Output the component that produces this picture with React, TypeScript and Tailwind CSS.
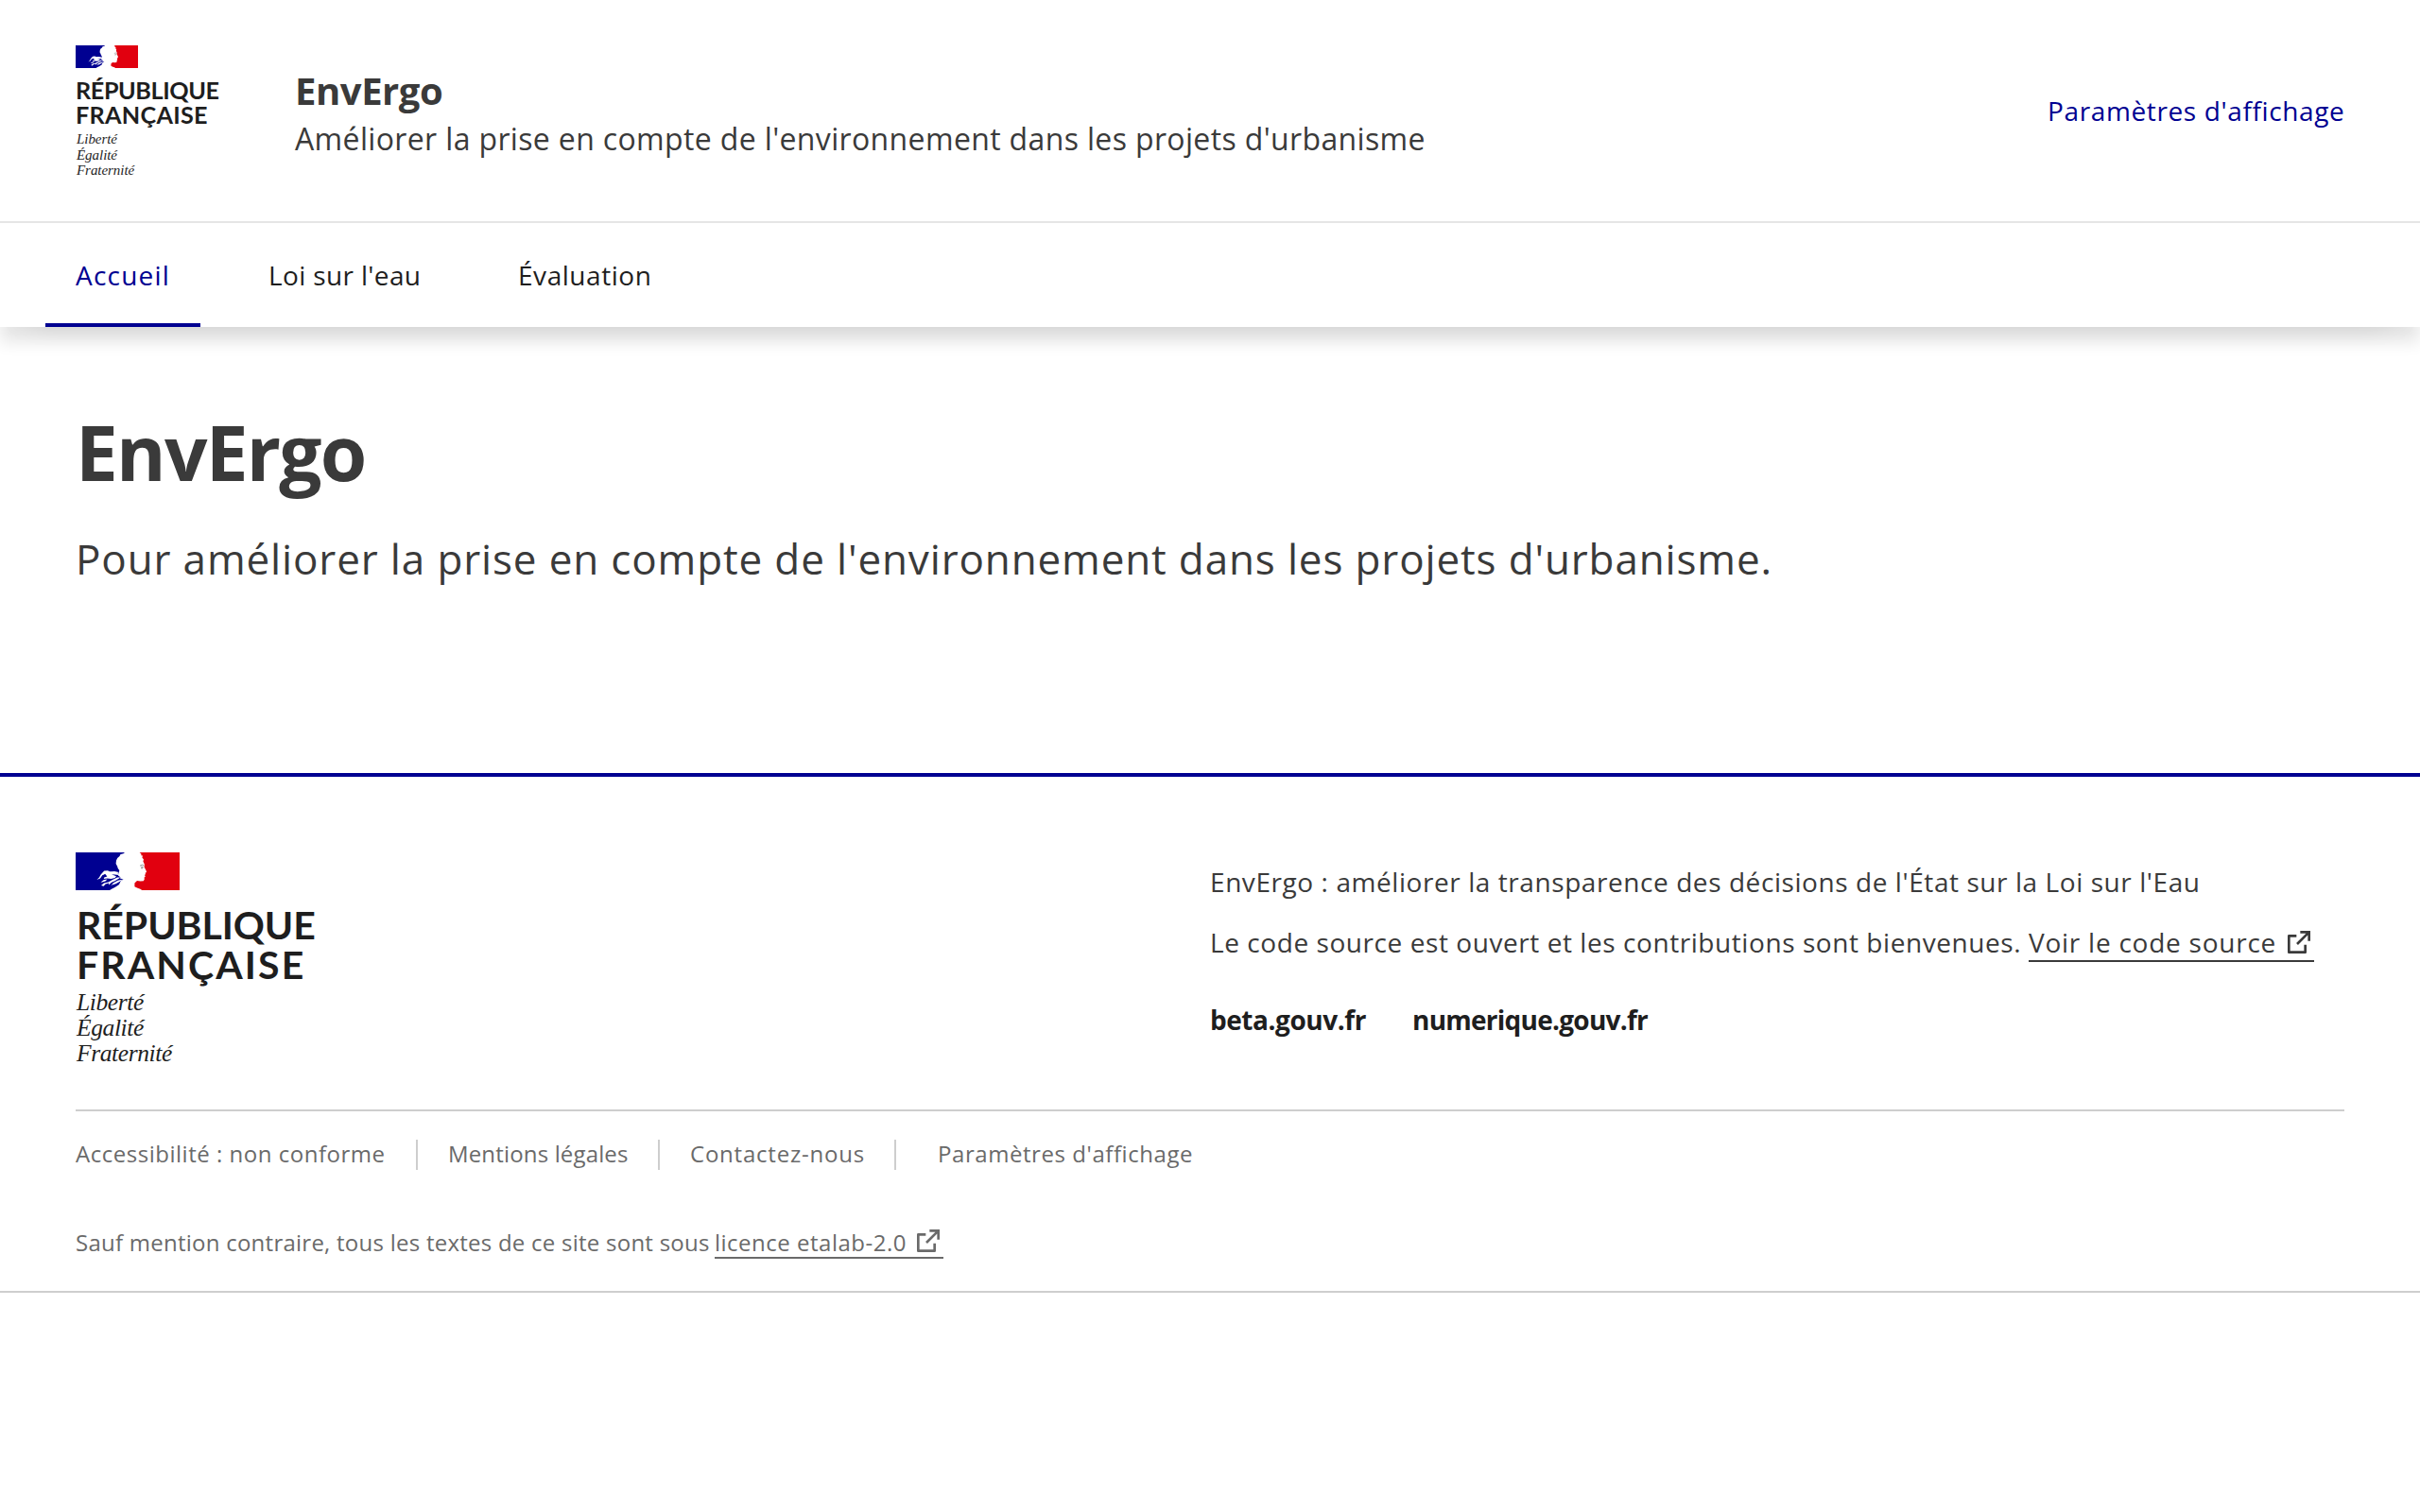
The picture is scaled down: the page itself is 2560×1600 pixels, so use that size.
import React from "react";

function Marianne({ className }: { className: string }) {
  return (
    <svg viewBox="0 0 110 40" className={className} aria-hidden="true">
      <path d="M0 0h110v40H0z" fill="#fff" />
      <path
        fill="#000091"
        d="M0 0H52L50.5 1.2 47.5 2 46.5 4 44.2 6 43 8.5 42.6 12 44 14.5 44.8 17 46.3 19 45.6 21.4 45 24.5 47.4 26.2 47 27.6 50.5 28.6 47.6 30.6 46 34 41.5 37 38.5 38.4 36 40H0z"
      />
      <path
        fill="#fff"
        d="M22.4 29 25 26.6 26.6 23.4 30.2 19.4 34 19.2 36.5 20.6 40.5 21.2 45.8 22.4 45.6 24 41.5 23.6 38 23.2 43 25.2 41.5 27 37.5 28 33.5 27.4 29.8 28 30.2 26.6 33.4 25.6 31 22.6 28.2 24.2 26 27.4z"
      />
      <path
        fill="#fff"
        d="M35.5 20.4 41 20 45.6 21 44 22.4 39 22zM26.5 31.4 30 29 33.5 28.6 31.5 30.6 28 31.6zM27 35 30 32.4 34.6 31.4 39 29 44 26.6 47.4 26.4 46 27.6 41.5 30.2 38 31.8 35 34.6 35.2 32.4 31.6 33.6 29.6 35.8zM37 35.4 40 32.2 44.5 29.8 50.4 28.6 46 31.2 42.5 33.2 38.4 34.4zM28 24 30.6 21.4 33.4 20.8 31 23z"
      />
      <path
        fill="#e1000f"
        d="M67.6 0H110V40H70.2L68.4 38.8 65.6 37.8 62.4 36.2 62.4 32.4 65 30 68.6 30.4 71.8 30.2 72.8 28.6 72.6 26.6 73.8 25.4 73 24 74 23 73.6 21.8 75 21 74.6 19.2 72.6 15.6 72.8 12.4 71.4 9.4 72 7.4 70.4 5.6 71 3.4 69.4 3.2 69.4 1.4z"
      />
      <path d="M68 14.2 70.4 13.2 72 13.8M69.2 15.2 71.2 15.4 70.6 17 69 16.6" fill="none" stroke="#8a8a8a" strokeWidth=".9" />
    </svg>
  );
}

function ExternalIcon({ className }: { className: string }) {
  return (
    <svg viewBox="0 0 24 24" fill="currentColor" className={className} aria-hidden="true">
      <path d="M10 6v2H5v11h11v-5h2v6a1 1 0 0 1-1 1H4a1 1 0 0 1-1-1V7a1 1 0 0 1 1-1h6zm11-3v8h-2V6.413l-7.793 7.794-1.414-1.414L17.585 5H13V3h8z" />
    </svg>
  );
}

function Header() {
  return (
    <header className="bg-white shadow-[0_16px_16px_0_rgba(0,0,0,0.1),0_16px_32px_-32px_rgba(0,0,0,0.32)]">
      <div className="flex h-[236px] items-start border-b-2 border-[#e5e5e5] px-20">
        <div className="w-[233px] pt-12 text-[#1e1e1e]">
          <Marianne className="block h-6 w-[66px]" />
          <div className="mt-[10px] font-['Lato',sans-serif] text-[25.2px] leading-[26px] font-bold">
            <p className="tracking-[-0.4px]">RÉPUBLIQUE</p>
            <p className="tracking-[0.28px]">FRANÇAISE</p>
          </div>
          <div className="mt-[5px] pl-px font-['Liberation_Serif',serif] text-[15px] leading-[16.5px] tracking-[-0.05px] italic">
            <p>Liberté</p>
            <p>Égalité</p>
            <p>Fraternité</p>
          </div>
        </div>
        <div className="grow pt-[71.5px]">
          <p className="-ml-px text-[40px] leading-[48px] font-bold tracking-[-0.435px]">EnvErgo</p>
          <p className="-ml-px mt-[3px] text-[32px] leading-[48px] tracking-[0.355px]">
            Améliorer la prise en compte de l'environnement dans les projets d'urbanisme
          </p>
        </div>
        <a className="mt-[93px] w-[314px] text-[28px] leading-[48px] tracking-[0.625px] whitespace-nowrap text-[#000091]">
          Paramètres d'affichage
        </a>
      </div>
      <nav className="flex h-[110px] pl-12 text-[28px] leading-[48px] whitespace-nowrap text-[#1e1e1e]">
        <a className="w-[164px] border-b-4 border-[#000091] pt-[31px] pl-[32px] tracking-[1.2px] text-[#000091]">Accueil</a>
        <a className="ml-[72px] w-[160px] pt-[31px] tracking-[0.36px]">Loi sur l'eau</a>
        <a className="ml-[104px] pt-[31px] tracking-[0.55px]">Évaluation</a>
      </nav>
    </header>
  );
}

function FooterTop() {
  return (
    <div className="flex h-[354px] items-start border-b-2 border-[#cecece] pt-20">
      <div className="w-[1200px] text-[#1e1e1e]">
        <Marianne className="block h-10 w-[110px]" />
        <div className="mt-4 pl-px font-['Lato',sans-serif] text-[41px] leading-[42px] font-bold">
          <p className="tracking-[-0.06px]">RÉPUBLIQUE</p>
          <p className="tracking-[2.1px]">FRANÇAISE</p>
        </div>
        <div className="mt-[5px] pl-px font-['Liberation_Serif',serif] text-[25.5px] leading-[27px] tracking-[-0.4px] italic">
          <p>Liberté</p>
          <p>Égalité</p>
          <p>Fraternité</p>
        </div>
      </div>
      <div className="pt-[7px] text-[28px] leading-[48px] whitespace-nowrap">
        <p className="tracking-[0.572px]">EnvErgo : améliorer la transparence des décisions de l'État sur la Loi sur l'Eau</p>
        <div className="mt-4 flex h-12 items-start">
          <p className="w-[866px] tracking-[0.567px]">Le code source est ouvert et les contributions sont bienvenues.</p>
          <a className="flex h-[45px] w-[302px] justify-between border-b-2 border-[#3a3a3a] tracking-[0.756px]">
            Voir le code source
            <ExternalIcon className="mt-2 size-8" />
          </a>
        </div>
        <div className="mt-[34px] flex font-bold text-[#1e1e1e]">
          <a className="w-[214px] tracking-[-0.45px]">beta.gouv.fr</a>
          <a className="tracking-[-0.75px]">numerique.gouv.fr</a>
        </div>
      </div>
    </div>
  );
}

function FooterBottom() {
  return (
    <div className="h-[190px] pt-[25px] text-2xl leading-10 whitespace-nowrap text-[#6a6a6a]">
      <div className="flex h-10 items-start">
        <a className="w-[360px] leading-10 tracking-[0.52px]">Accessibilité : non conforme</a>
        <span className="mt-[5px] h-8 w-[2px] bg-[#cecece]" />
        <a className="ml-8 w-[222px] leading-10 tracking-[0.156px]">Mentions légales</a>
        <span className="mt-[5px] h-8 w-[2px] bg-[#cecece]" />
        <a className="ml-8 w-[216px] leading-10 tracking-[0.78px]">Contactez-nous</a>
        <span className="mt-[5px] h-8 w-[2px] bg-[#cecece]" />
        <a className="ml-11 leading-10 tracking-[0.563px]">Paramètres d'affichage</a>
      </div>
      <div className="mt-[54px] flex items-start leading-10">
        <p className="w-[676px] tracking-[0.249px]">Sauf mention contraire, tous les textes de ce site sont sous</p>
        <a className="flex h-[37px] w-[242px] justify-between border-b-2 border-[#6a6a6a] tracking-[0.5px]">
          licence etalab-2.0
          <ExternalIcon className="mt-[2px] size-8" />
        </a>
      </div>
    </div>
  );
}

export default function App() {
  return (
    <div className="min-h-screen bg-white font-['Open_Sans',sans-serif] text-[#3a3a3a]">
      <Header />
      <main className="h-[472px] px-20 pt-[84px]">
        <h1 className="text-[80px] leading-[96px] font-bold tracking-[-1.736px]">EnvErgo</h1>
        <p className="mt-[33px] text-[44px] leading-[64px] tracking-[0.856px]">
          Pour améliorer la prise en compte de l'environnement dans les projets d'urbanisme.
        </p>
      </main>
      <footer className="border-t-4 border-b-2 border-t-[#000091] border-b-[#cecece] px-20">
        <FooterTop />
        <FooterBottom />
      </footer>
    </div>
  );
}
